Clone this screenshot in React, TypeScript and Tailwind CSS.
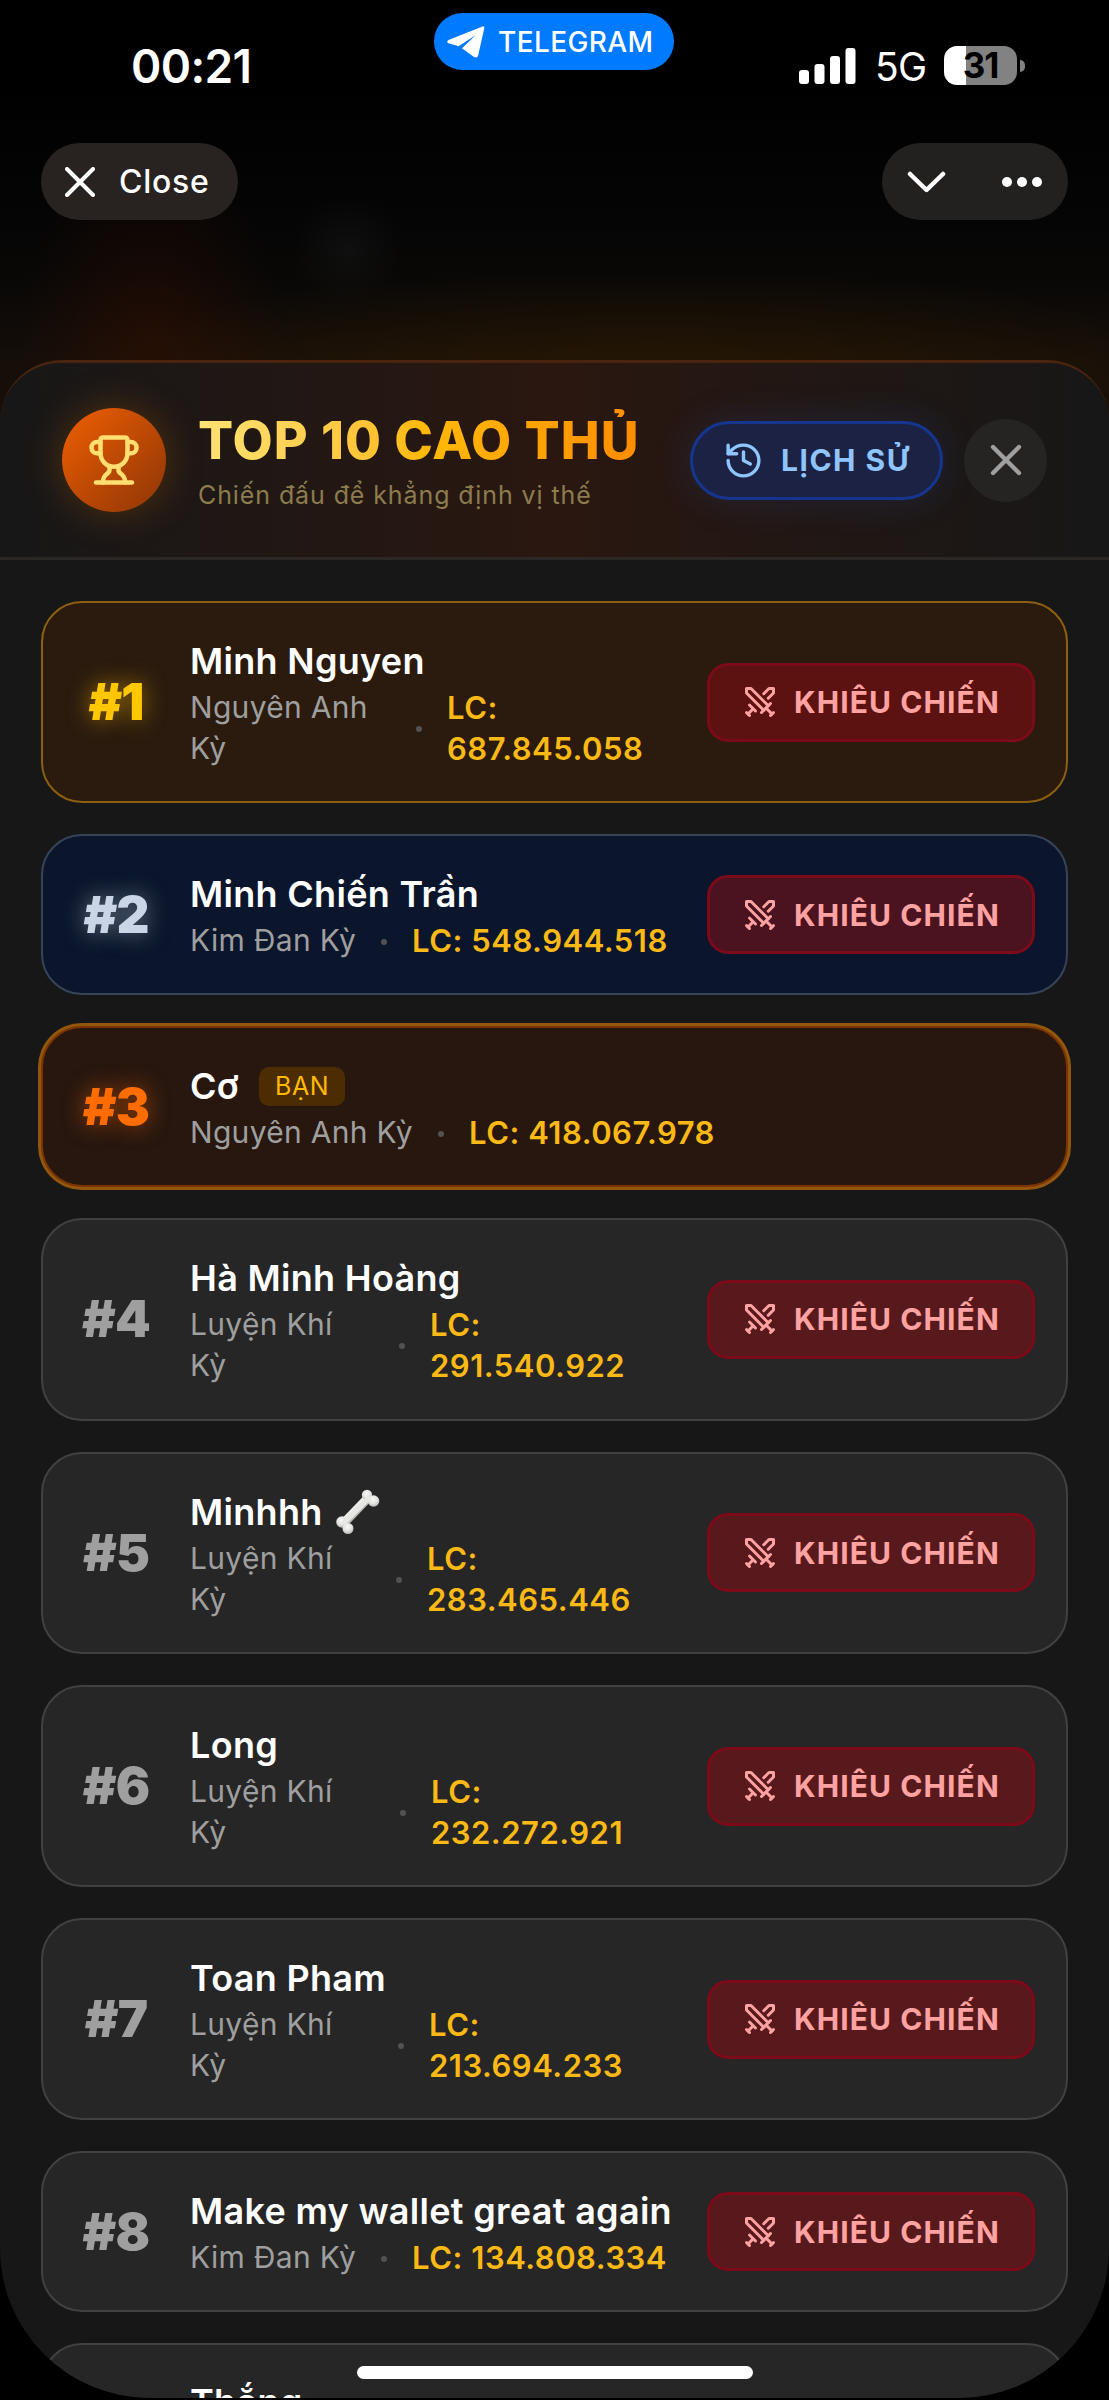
import { clsx } from 'clsx'
import { History, Swords, Trophy, X } from 'lucide-react'

interface Player {
  rank: number
  name: string
  tier: string
  power: string
  tierWidth?: string
  isMe?: boolean
  bone?: boolean
}

const players: Player[] = [
  { rank: 1, name: 'Minh Nguyen', tier: 'Nguyên Anh Kỳ', power: '687.845.058', tierWidth: 'w-[201px]' },
  { rank: 2, name: 'Minh Chiến Trần', tier: 'Kim Đan Kỳ', power: '548.944.518' },
  { rank: 3, name: 'Cơ', tier: 'Nguyên Anh Kỳ', power: '418.067.978', isMe: true },
  { rank: 4, name: 'Hà Minh Hoàng', tier: 'Luyện Khí Kỳ', power: '291.540.922', tierWidth: 'w-[184px]' },
  { rank: 5, name: 'Minhhh', tier: 'Luyện Khí Kỳ', power: '283.465.446', tierWidth: 'w-[181px]', bone: true },
  { rank: 6, name: 'Long', tier: 'Luyện Khí Kỳ', power: '232.272.921', tierWidth: 'w-[185px]' },
  { rank: 7, name: 'Toan Pham', tier: 'Luyện Khí Kỳ', power: '213.694.233', tierWidth: 'w-[183px]' },
  { rank: 8, name: 'Make my wallet great again', tier: 'Kim Đan Kỳ', power: '134.808.334' },
]

const cardStyles: Record<number, string> = {
  1: 'bg-[#2a1b0e] border-[#8c6010]',
  2: 'bg-[#0b162c] border-[#36445a]',
  3: 'bg-[#27170f] border-[#7a3304]',
}

const rankStyles: Record<number, string> = {
  1: 'text-[#ffc800] [text-shadow:0_0_22px_rgba(240,177,0,0.6)]',
  2: 'text-[#cad5e7] [text-shadow:0_0_22px_rgba(202,213,226,0.5)]',
  3: 'text-[#ff6c00] [text-shadow:0_0_22px_rgba(245,100,0,0.6)]',
}

const BoneIcon = () => (
  <svg viewBox="0 0 44 46" className="ml-[13px] h-[46px] w-11" aria-hidden="true">
    <defs>
      <radialGradient id="knob" cx="0.45" cy="0.35" r="0.65">
        <stop offset="0" stopColor="#f8f8f6" />
        <stop offset="0.6" stopColor="#e2e2e0" />
        <stop offset="1" stopColor="#b4b4b2" />
      </radialGradient>
    </defs>
    <path d="M9 33L32 9" stroke="#b9b9b7" strokeWidth="9" />
    <path d="M8.500 31.500L31 8.500" stroke="#ececea" strokeWidth="6.500" />
    <circle cx="31" cy="6" r="5.200" fill="url(#knob)" />
    <circle cx="37.500" cy="12" r="5.800" fill="url(#knob)" />
    <circle cx="6" cy="33" r="5.800" fill="url(#knob)" />
    <circle cx="12" cy="39.500" r="5.500" fill="url(#knob)" />
    <path d="M9 33L32 10" stroke="#e6e6e4" strokeWidth="5" strokeLinecap="round" />
  </svg>
)

const StatusBar = () => (
  <div className="flex h-[143px] items-start pr-[83px] pl-[131px]">
    <span className="w-[303px] pt-[38px] text-[46px] leading-[56px] font-semibold tracking-[-0.6px]">
      00:21
    </span>
    <div className="mt-[13px] flex h-[57px] w-[240px] items-center rounded-full bg-[#007aff] pl-[13px]">
      <svg viewBox="0 0 38 32" className="h-8 w-[38px] fill-white" aria-hidden="true">
        <path d="M35.500 0.500L1.500 14C-0.300 15 0 16.500 1.500 17.200L11.500 20.300L28.500 9.200L15 22.300L27 31C29 32 30.700 31.500 31.200 29.300L37.300 2.300C37.500 0.800 36.800 0 35.500 0.500Z" />
      </svg>
      <span className="ml-[13px] text-[28px] leading-8 font-medium tracking-[0.4px]">TELEGRAM</span>
    </div>
    <div className="ml-auto flex w-[227px] items-center pt-[46px]">
      <svg viewBox="0 0 57 38" className="h-[38px] w-[57px] shrink-0 fill-white" aria-hidden="true">
        <rect x="0" y="23" width="10" height="14" rx="3" />
        <rect x="15.500" y="17" width="10" height="20" rx="3" />
        <rect x="31" y="9" width="10" height="28" rx="3" />
        <rect x="46.500" y="1" width="10" height="36" rx="3" />
      </svg>
      <span className="ml-[19px] w-[54px] pt-[2px] text-[39px] leading-9 tracking-[-0.7px]">5G</span>
      <div className="ml-[15px] flex h-[39px] w-[73px] shrink-0 items-center justify-center rounded-[13px] bg-linear-to-r from-white from-30% to-[#828282] to-30% text-[35px] leading-[39px] font-bold tracking-[-1px] text-black">
        31
      </div>
      <div className="ml-[3px] h-3 w-[5px] shrink-0 rounded-r-full bg-[#828282]" />
    </div>
  </div>
)

const Toolbar = () => (
  <div className="flex h-[77px] justify-between px-[41px]">
    <button className="flex w-[197px] items-center rounded-full bg-[#282220] pl-6">
      <svg viewBox="0 0 30 30" className="size-[30px]" aria-hidden="true">
        <path d="M2 2L28 28M28 2L2 28" stroke="white" strokeWidth="4" strokeLinecap="round" />
      </svg>
      <span className="ml-[24px] text-[32px] leading-10 font-medium tracking-[0.7px]">Close</span>
    </button>
    <button className="flex w-[186px] items-center rounded-full bg-[#222120] pl-[25px]">
      <svg viewBox="0 0 136 26" className="h-[26px] w-[136px]" aria-hidden="true">
        <path d="M3 5L19.500 21L36 5" fill="none" stroke="white" strokeWidth="4.500" strokeLinecap="round" strokeLinejoin="round" />
        <circle cx="100" cy="13" r="5" fill="white" />
        <circle cx="115" cy="13" r="5" fill="white" />
        <circle cx="130" cy="13" r="5" fill="white" />
      </svg>
    </button>
  </div>
)

const SheetHeader = () => (
  <header className="flex h-[197px] shrink-0 items-center border-b-3 border-[#2a2725] bg-linear-to-r from-[#171717] via-[#2a1710] to-[#171717] px-[62px]">
    <div className="flex size-[104px] shrink-0 items-center justify-center rounded-full bg-linear-to-br from-[#f06000] to-[#8f3505] shadow-[0_0_40px_rgba(200,110,0,0.32)]">
      <Trophy className="size-[54px] text-[#ffdf70]" strokeWidth={2} />
    </div>
    <div className="ml-8 flex-1">
      <h1 className="w-[445px] bg-linear-to-r from-[#ffe373] via-[#ffba0a] to-[#ff8c00] bg-clip-text pt-1 text-[52px] leading-[62px] font-extrabold tracking-[1px] whitespace-nowrap text-transparent">
        TOP 10 CAO THỦ
      </h1>
      <p className="mt-1 text-[25px] leading-[39px] tracking-[0.9px] whitespace-nowrap text-[#8c7c4e]">
        Chiến đấu để khẳng định vị thế
      </p>
    </div>
    <button className="flex h-[79px] w-[253px] shrink-0 items-center rounded-full border-3 border-[#16358f] bg-[#1c2244] pl-[30px] text-[#8ec5ff] shadow-[0_0_38px_rgba(43,90,200,0.2)]">
      <History className="size-[41px]" />
      <span className="ml-[17px] text-[30px] leading-10 font-bold tracking-[1.5px] whitespace-nowrap">LỊCH SỬ</span>
    </button>
    <button className="ml-[21px] flex size-[83px] shrink-0 items-center justify-center rounded-full bg-[#262423] text-[#9f9f9f]">
      <X className="size-[52px]" strokeWidth={2} />
    </button>
  </header>
)

const PlayerCard = ({ player }: { player: Player }) => {
  const { rank, name, tier, power, tierWidth, isMe, bone } = player

  return (
    <li
      className={clsx(
        'flex shrink-0 items-center rounded-[41px] border-2 pr-[31px] pl-[33px]',
        tierWidth ? 'h-[202.3px]' : 'h-[161px]',
        cardStyles[rank] ?? 'border-[#414141] bg-[#262626]',
        isMe && 'ring-3 ring-[#92560d]'
      )}
    >
      <div
        className={clsx(
          'w-20 shrink-0 text-center text-[51px] leading-[60px] font-black tracking-[-0.8px]',
          rankStyles[rank] ?? 'text-[#9f9f9f]'
        )}
      >
        #{rank}
      </div>
      <div className="ml-[34px] min-w-0 flex-1">
        <div className="flex h-[52px] items-center text-[36px] leading-[52px] font-semibold tracking-[0.3px] whitespace-nowrap">
          {name}
          {isMe && (
            <span className="ml-5 flex h-[39px] items-center rounded-[10px] bg-[#4c2c03] px-4 text-[25px] font-normal tracking-[0.6px] text-[#ffb900]">
              BẠN
            </span>
          )}
          {bone && <BoneIcon />}
        </div>
        <div className="flex items-center text-[30px] leading-[41px] tracking-[0.3px]">
          <span className={clsx('shrink-0 text-[#9f9f9f]', tierWidth ? `${tierWidth} pr-2` : 'whitespace-nowrap')}>
            {tier}
          </span>
          <span className="mx-[25px] mt-[2px] size-[6px] shrink-0 rounded-full bg-[#525252]" />
          <span
            className={clsx(
              'shrink-0 text-[31px] font-semibold tracking-[0.5px] text-[#fbb915]',
              tierWidth ? 'w-[205px]' : 'whitespace-nowrap'
            )}
          >
            LC: {power}
          </span>
        </div>
      </div>
      {!isMe && (
        <button
          className={clsx(
            'flex h-[79px] w-[328px] shrink-0 items-center rounded-[21px] border-3 border-[#7c0a18] pl-8 text-[#ffa2a2]',
            rank === 1 ? 'bg-[#5b1211]' : rank === 2 ? 'bg-[#4b1320]' : 'bg-[#58191c]'
          )}
        >
          <Swords className="size-9" />
          <span className="ml-4 text-[30px] leading-10 font-bold tracking-[1.1px] whitespace-nowrap">
            KHIÊU CHIẾN
          </span>
        </button>
      )}
    </li>
  )
}

export default function App() {
  return (
    <div className="relative h-[2400px] w-[1109px] overflow-hidden bg-black font-[Inter,sans-serif] text-white">
      <div className="flex h-[2398px] flex-col overflow-hidden rounded-b-[150px] bg-[radial-gradient(ellipse_130px_190px_at_150px_340px,rgba(60,16,0,0.4),transparent),radial-gradient(ellipse_55px_55px_at_348px_250px,rgba(34,36,36,0.3),transparent),radial-gradient(ellipse_620px_120px_at_650px_390px,rgba(48,28,0,0.7),transparent),linear-gradient(180deg,#000_80px,#060505_220px,#080706_270px,#150e09_360px,#150e09)]">
        <StatusBar />
        <Toolbar />
        <main className="mt-[140px] flex min-h-0 flex-1 flex-col overflow-hidden rounded-t-[62px] border-t-3 border-[#4a240f] bg-[#171717]">
          <SheetHeader />
          <ul className="flex flex-col gap-[31px] px-[41px] pt-[41px]">
            {players.map((player) => (
              <PlayerCard key={player.rank} player={player} />
            ))}
            {/* next row, only its top edge is scrolled into view */}
            <li className="h-[202px] shrink-0 rounded-[41px] border-2 border-[#414141] bg-[#262626] pt-[31px] pl-[147px] text-[36px] leading-[52px] font-semibold tracking-[0.3px]">
              Thắng
            </li>
          </ul>
        </main>
      </div>
      <div className="absolute bottom-[21px] left-[357px] h-[13px] w-[396px] rounded-full bg-white" />
    </div>
  )
}
